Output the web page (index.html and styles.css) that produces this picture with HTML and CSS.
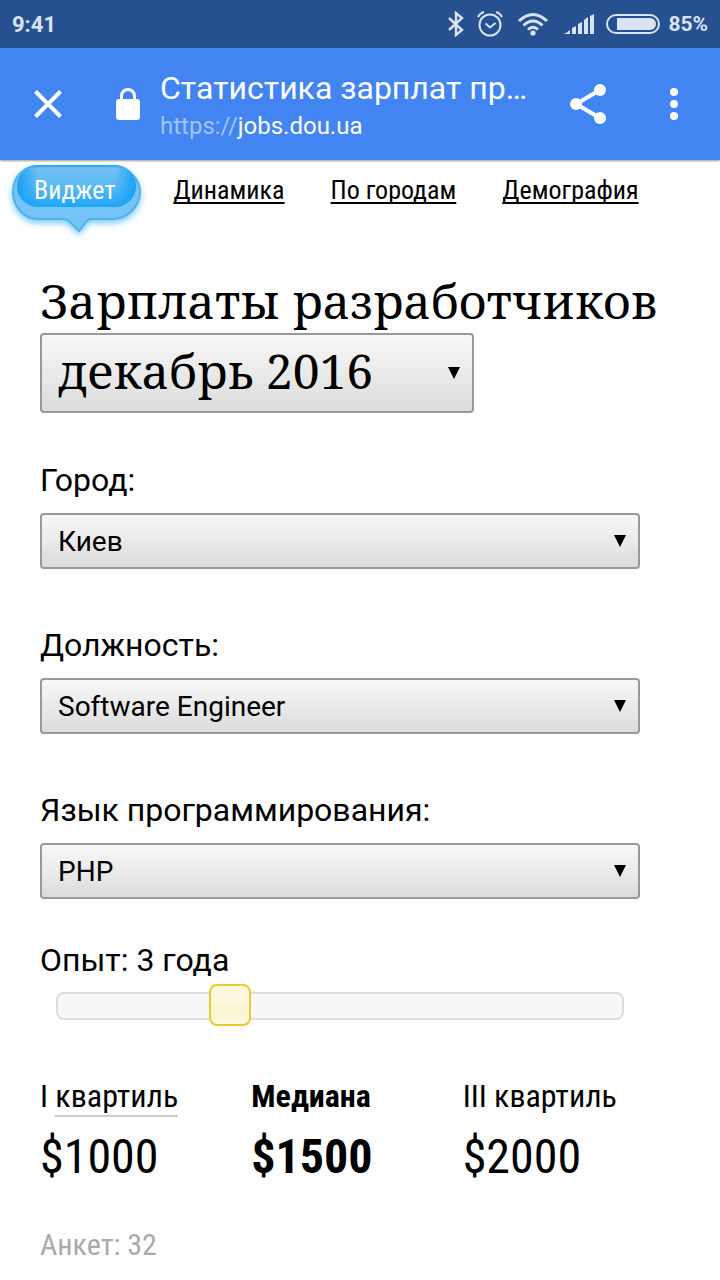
FILE: index.html
```html
<!DOCTYPE html>
<html lang="ru">

<head>
	<meta charset="UTF-8">
	<meta name="viewport" content="width=device-width, initial-scale=1">
	<title>Статистика зарплат</title>
	<link rel="stylesheet" href="styles.css">
</head>

<body>
	<div class="status">
		<span>9:41</span>
		<div class="status-icons">
			<svg width="16" height="26" viewBox="0 0 16 26" fill="none" stroke="currentColor" stroke-width="2.400">
				<path d="M1 7l13 12-6 5V2l6 5L1 19" />
			</svg>
			<svg class="alarm" width="26" height="26" viewBox="0 0 26 26" fill="none" stroke="currentColor" stroke-width="2">
				<circle cx="13" cy="14" r="10.500" />
				<path d="M8.500 12.500l4.500 4 5.500-4.500M1 6q2-4 6-5M25 6q-2-4-6-5" />
			</svg>
			<svg class="wifi" width="32" height="24" viewBox="0 0 32 24" fill="none" stroke="currentColor" stroke-width="3">
				<path d="M2 9q14-13 28 0M6.500 13.500q9.500-9 19 0M11 17.500q5-4.500 10 0" />
				<circle cx="16" cy="21" r="2.600" fill="currentColor" stroke="none" />
			</svg>
			<svg class="signal" width="31" height="22" viewBox="0 0 31 22" fill="currentColor">
				<path d="M0 21q4-1 7-4v4zM9 15l4-2v8H9zM15 11l4-2v12h-4zM21 7l4-3v17h-4zM27 3l4-2v20h-4z" />
			</svg>
			<svg class="battery" width="54" height="20" viewBox="0 0 54 20">
				<rect x="1" y="1" width="52" height="18" rx="9" fill="none" stroke="currentColor" stroke-width="2" />
				<path d="M11 4h33a6 6 0 0 1 0 12H11z" fill="currentColor" />
			</svg>
			<span>85%</span>
		</div>
	</div>

	<header class="toolbar">
		<button class="icon-button" aria-label="Закрыть">
			<svg width="28" height="28" viewBox="0 0 28 28" stroke="currentColor" stroke-width="4">
				<path d="M1.500 1.500l25 25M26.500 1.500l-25 25" />
			</svg>
		</button>
		<svg class="lock" width="24" height="32" viewBox="0 0 24 32">
			<rect y="11" width="24" height="21" rx="3" fill="currentColor" />
			<path d="M5.500 12V8a6.500 6.500 0 0 1 13 0v4" fill="none" stroke="currentColor" stroke-width="3" />
		</svg>
		<div class="address">
			<div class="address-title">Статистика зарплат пр…</div>
			<div class="address-url"><span>https://</span>jobs.dou.ua</div>
		</div>
		<button class="icon-button" aria-label="Поделиться">
			<svg width="36" height="40" viewBox="0 0 36 40" fill="currentColor">
				<path d="M30 6L6 20l24 14" fill="none" stroke="currentColor" stroke-width="4" />
				<circle cx="30" cy="6" r="6" />
				<circle cx="6" cy="20" r="6" />
				<circle cx="30" cy="34" r="6" />
			</svg>
		</button>
		<button class="icon-button menu" aria-label="Меню">
			<svg width="8" height="32" viewBox="0 0 8 32" fill="currentColor">
				<circle cx="4" cy="4" r="4" />
				<circle cx="4" cy="16" r="4" />
				<circle cx="4" cy="28" r="4" />
			</svg>
		</button>
	</header>

	<nav class="tabs">
		<a class="tab active" href="#widget">
			<svg class="bubble" width="144" height="80" viewBox="0 0 144 80">
				<defs>
					<linearGradient id="fill" x1="0" y1="0" x2="0" y2="1">
						<stop offset="0" stop-color="#2a9fe8" />
						<stop offset=".08" stop-color="#72c2f3" />
						<stop offset=".5" stop-color="#5cbaf5" />
						<stop offset="1" stop-color="#1da5f8" />
					</linearGradient>
					<linearGradient id="sides">
						<stop offset="0" stop-color="#1a9ff5" />
						<stop offset=".18" stop-color="#1a9ff5" stop-opacity="0" />
						<stop offset=".82" stop-color="#1a9ff5" stop-opacity="0" />
						<stop offset="1" stop-color="#1a9ff5" />
					</linearGradient>
					<filter id="glow" x="-20%" y="-20%" width="140%" height="150%">
						<feDropShadow dx="0" dy="3" stdDeviation="3" flood-color="#38b6ff" flood-opacity=".7" />
					</filter>
				</defs>
				<path d="M33 6h74c15 0 28 12 28 26 0 14-12 27-28 27H86q-3 0-5 3l-7 9-9-9q-3-3-6-3H33C18 59 8 46 8 32 8 17 18 6 33 6z" fill="#74c4f7" stroke="#54b0e6" stroke-width="2" filter="url(#glow)" />
				<rect x="12" y="5" width="119" height="42" rx="21" fill="url(#fill)" />
				<rect x="12" y="5" width="119" height="42" rx="21" fill="url(#sides)" />
			</svg>
			<span>Виджет</span>
		</a>
		<a class="tab" href="#dynamics">Динамика</a>
		<a class="tab" href="#cities">По городам</a>
		<a class="tab" href="#demography">Демография</a>
	</nav>

	<main class="content">
		<h1><label for="period">Зарплаты разработчиков</label></h1>
		<div class="select period">
			<select id="period">
				<option>декабрь 2016</option>
			</select>
		</div>

		<form class="filters">
			<div class="field">
				<label for="city">Город:</label>
				<div class="select">
					<select id="city">
						<option>Киев</option>
					</select>
				</div>
			</div>
			<div class="field">
				<label for="title">Должность:</label>
				<div class="select">
					<select id="title">
						<option>Software Engineer</option>
					</select>
				</div>
			</div>
			<div class="field">
				<label for="language">Язык программирования:</label>
				<div class="select">
					<select id="language">
						<option>PHP</option>
					</select>
				</div>
			</div>
			<div class="experience">
				<label for="experience">Опыт: 3 года</label>
				<input id="experience" type="range" min="0" max="10" step="0.1" value="2.9">
			</div>
		</form>

		<section class="results">
			<div>
				<h2>I <span class="hint">квартиль</span></h2>
				<p>$1000</p>
			</div>
			<div class="median">
				<h2>Медиана</h2>
				<p>$1500</p>
			</div>
			<div>
				<h2>III квартиль</h2>
				<p>$2000</p>
			</div>
		</section>
		<p class="total">Анкет: 32</p>
	</main>
</body>

</html>
```
FILE: styles.css
```css
* {
	box-sizing: border-box;
}

body {
	margin: 0;
	background-color: white;
	color: black;
	font-family: Roboto, sans-serif;
	font-size: 32px;
}

h1,
h2,
p {
	margin: 0;
	font-weight: normal;
}

svg {
	display: block;
	flex: none;
}

/* status bar */
.status {
	display: flex;
	justify-content: space-between;
	align-items: center;
	height: 48px;
	padding: 0 12px;
	background-color: #26508f;
	color: #d8e3f5;
	font-size: 22px;
	font-weight: bold;
}

.status-icons {
	display: flex;
	align-items: center;
	font-size: 21px;
}

.alarm {
	margin-left: 13px;
}

.wifi {
	margin-left: 14px;
}

.signal {
	margin-left: 14px;
}

.battery {
	margin: 0 8px 0 12px;
}

/* browser toolbar */
.toolbar {
	display: flex;
	align-items: center;
	height: 112px;
	padding: 0 22px 0 24px;
	background-color: #4285f2;
	box-shadow: 0 1px 2px rgba(0, 0, 0, 0.4);
	color: white;
}

.icon-button {
	display: flex;
	flex: none;
	align-items: center;
	justify-content: center;
	width: 48px;
	height: 48px;
	padding: 0;
	border: 0;
	background: none;
	color: inherit;
}

.menu {
	margin-left: 38px;
}

.lock {
	margin: 0 20px 0 44px;
}

.address {
	flex: 1;
	min-width: 0;
	margin-right: 38px;
	padding-top: 4px;
	white-space: nowrap;
}

.address-title {
	font-size: 32px;
	line-height: 40px;
}

.address-url {
	font-size: 24px;
	line-height: 36px;
}

.address-url span {
	color: #a3c4fa;
}

/* tabs */
.tabs {
	display: flex;
	gap: 46px;
	padding: 14px 34px 0;
	font-family: "Roboto Condensed", "Liberation Sans Narrow", Roboto, sans-serif;
	font-size: 26px;
	line-height: 32px;
	white-space: nowrap;
}

.tab {
	position: relative;
	color: black;
	text-decoration-thickness: 2px;
	text-underline-offset: 3px;
	text-decoration-skip-ink: none;
}

.active {
	margin-right: 12px;
	color: white;
	text-decoration: none;
}

.active span {
	position: relative;
}

.bubble {
	position: absolute;
	top: -14px;
	left: -29px;
}

/* form */
.content {
	padding: 69px 40px 0;
}

h1 {
	margin-bottom: 6px;
	font-family: "Noto Serif", "DejaVu Serif", serif;
	font-size: 48px;
	line-height: 52px;
	white-space: nowrap;
}

.select {
	position: relative;
}

.select::after {
	content: "";
	position: absolute;
	top: 50%;
	right: 14px;
	margin-top: -6px;
	border: 6px solid transparent;
	border-top: 12px solid black;
	border-bottom: 0;
	pointer-events: none;
}

select {
	display: block;
	width: 100%;
	height: 56px;
	padding: 0 16px;
	appearance: none;
	border: 2px solid #999;
	border-radius: 4px;
	background: linear-gradient(#f8f8f8, #dcdcdc);
	color: black;
	font-family: inherit;
	font-size: 28px;
}

.period {
	width: 434px;
	max-width: 100%;
}

.period select {
	height: 80px;
	padding-bottom: 6px;
	font-family: "Noto Serif", "DejaVu Serif", serif;
	font-size: 48px;
}

.filters {
	margin: 49px 40px 0 0;
}

label {
	display: block;
}

.filters label {
	line-height: 36px;
}

.field {
	margin-bottom: 58px;
}

.field .select {
	margin-top: 15px;
}

.field:nth-child(3) {
	margin-bottom: 43px;
}

.experience {
	display: flex;
	flex-direction: column;
	gap: 7px;
}

input[type=range] {
	height: 42px;
	margin: 0 16px;
	appearance: none;
	background: none;
}

input[type=range]::-webkit-slider-runnable-track {
	height: 28px;
	border: 2px solid #ddd;
	border-radius: 8px;
	background-color: #f8f8f8;
}

input[type=range]::-webkit-slider-thumb {
	width: 42px;
	height: 42px;
	margin-top: -10px;
	appearance: none;
	border: 2px solid #e8cb30;
	border-radius: 8px;
	background: linear-gradient(#fcf8e0 50%, #fbf3cb 50%, #fdf9e2);
}

/* results */
.results {
	display: grid;
	grid-template-columns: repeat(3, 1fr);
	gap: 34px;
	margin: 51px 40px 0 0;
	font-family: "Roboto Condensed", "Liberation Sans Narrow", Roboto, sans-serif;
	white-space: nowrap;
}

h2 {
	font-size: 32px;
	line-height: 36px;
}

.hint {
	border-bottom: 2px solid #ccc;
}

.results p {
	margin-top: 15px;
	font-size: 48px;
	line-height: 56px;
}

.median h2,
.median p {
	font-weight: bold;
}

.total {
	margin-top: 42px;
	color: #aaa;
	font-family: "Roboto Condensed", "Liberation Sans Narrow", Roboto, sans-serif;
	font-size: 30px;
	line-height: 36px;
}
```
